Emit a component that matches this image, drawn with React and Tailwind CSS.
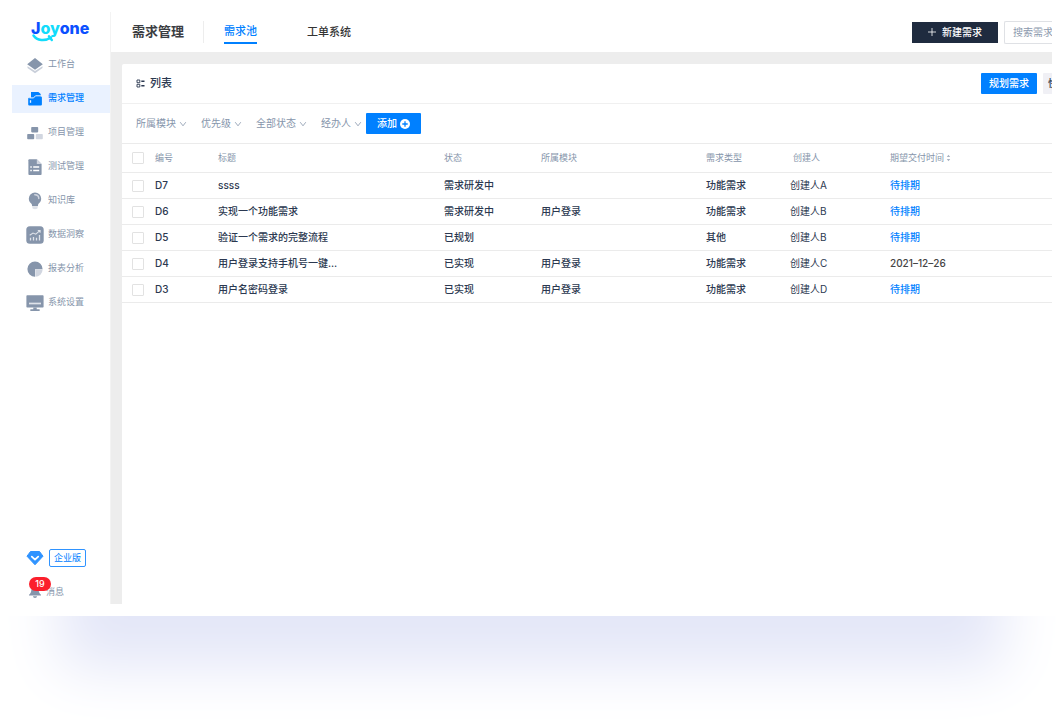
import { useState } from "react";

const menuItems = [
  { key: "workbench", label: "工作台" },
  { key: "demand", label: "需求管理" },
  { key: "project", label: "项目管理" },
  { key: "test", label: "测试管理" },
  { key: "wiki", label: "知识库" },
  { key: "insight", label: "数据洞察" },
  { key: "report", label: "报表分析" },
  { key: "settings", label: "系统设置" },
];

const filters = ["所属模块", "优先级", "全部状态", "经办人"];

const rows = [
  { id: "D7", title: "ssss", status: "需求研发中", module: "", type: "功能需求", creator: "创建人A", date: "" },
  { id: "D6", title: "实现一个功能需求", status: "需求研发中", module: "用户登录", type: "功能需求", creator: "创建人B", date: "" },
  { id: "D5", title: "验证一个需求的完整流程", status: "已规划", module: "", type: "其他", creator: "创建人B", date: "" },
  { id: "D4", title: "用户登录支持手机号一键…", status: "已实现", module: "用户登录", type: "功能需求", creator: "创建人C", date: "2021–12–26" },
  { id: "D3", title: "用户名密码登录", status: "已实现", module: "用户登录", type: "功能需求", creator: "创建人D", date: "" },
];

const MenuIcon = ({ name }) => {
  const shapes = {
    workbench: (
      <>
        <path d="M1.5 10.300 9 15l7.500-4.700v1.800L9 17.200l-7.500-5.100z" fill="#c9cfda" />
        <path d="M9 2 16.800 8.200 9 13.800 1.200 8.200z" />
      </>
    ),
    demand: (
      <>
        <path d="M5 2h7.400l2.300 2v4H5z" />
        <path d="M3.200 7.800h4.300l1.800-1.300h5.600a1 1 0 0 1 1 1v7a1 1 0 0 1-1 1H3.200a1 1 0 0 1-1-1V8.800a1 1 0 0 1 1-1z" />
        <path d="M3.400 7.900h4.200l1.900-2.100h5.400" fill="none" stroke="#eaf2ff" strokeWidth="1" />
        <path d="M4.500 10.200v2.600" stroke="#eaf2ff" strokeWidth="1.300" />
      </>
    ),
    project: (
      <>
        <rect x="5.200" y="3" width="7" height="5.400" rx=".8" />
        <rect x="1.200" y="10" width="7" height="5.200" rx=".8" />
        <rect x="9.800" y="10" width="7" height="5.200" rx=".8" fill="#d1d6e0" />
      </>
    ),
    test: (
      <>
        <path d="M3.300 1.300h7.500l4.800 4.800v10a.9.900 0 0 1-.9.900H3.300a.9.900 0 0 1-.9-.900V2.200a.9.900 0 0 1 .9-.900z" />
        <path d="M10.800 1.300v4.800h4.800z" fill="#d1d6e0" />
        <path d="M4.300 9h1.500M7.200 9h6M4.300 12.500h1.500M7.200 12.500h6" stroke="#fff" strokeWidth="1.300" />
      </>
    ),
    wiki: (
      <>
        <path d="M9 .500a6.200 6.200 0 0 1 6.200 6.200c0 2.600-1.600 4.200-2.900 5.300l-.5 2.300H6.200L5.700 12C4.400 10.900 2.800 9.300 2.800 6.700A6.200 6.200 0 0 1 9 .500z" />
        <path d="M8.800 2.800c2.200 0 3.900 1.300 4 3.600" fill="none" stroke="#d1d6e0" strokeWidth="1.500" strokeLinecap="round" />
        <path d="M6.400 14.900h5.200v1.200c0 .6-1 1.100-2.600 1.100s-2.600-.5-2.600-1.100z" fill="#dde1e8" />
      </>
    ),
    insight: (
      <>
        <rect x=".3" y=".3" width="17.400" height="17.400" rx="3.500" />
        <path d="M3.700 9.200 7 7l2.800 1.200 4-3.500M11.800 4.500h2.300v2.200" fill="none" stroke="#dfe3ea" strokeWidth="1.100" />
        <path d="M4.500 11.800v2.700M7.500 11v3.500M10.500 11.800v2.700M13.500 9v5.500" stroke="#dfe3ea" strokeWidth="1.300" />
      </>
    ),
    report: (
      <>
        <path d="M9 1.500a7.600 7.600 0 1 0 0 15.200V9.200h7.600A7.600 7.600 0 0 0 9 1.500z" />
        <path d="M9.300 9.500h7.300a7.400 7.400 0 0 1-7.300 7.300z" fill="#d1d6e0" />
      </>
    ),
    settings: (
      <>
        <rect x=".4" y="1.300" width="17.200" height="12.300" rx=".8" />
        <path d="M3 9.500h12" stroke="#dfe3ea" strokeWidth="1.700" />
        <path d="M7.300 13.500h3.400v1.700H13a.9.900 0 0 1 0 1.800H5a.9.900 0 0 1 0-1.800h2.300z" />
      </>
    ),
  };

  return (
    <svg viewBox="0 0 18 18" fill="currentColor" className="w-[18px] h-[18px] shrink-0" aria-hidden="true">
      {shapes[name]}
    </svg>
  );
};

const Logo = () => (
  <a href="#" className="relative block ml-[19px] h-6 font-['Inter',sans-serif] text-[16px] leading-6 font-extrabold text-[#0b50ff]">
    J<span className="text-[#12dcfb]">oy</span>one
    <svg viewBox="0 0 24 8" className="absolute left-px top-[18px] w-6 h-2" aria-hidden="true">
      <path d="M1.500 1.500C5 6.800 13 7.400 19 3.400M17 2.200l2.800 3.800" fill="none" stroke="#12dcfb" strokeWidth="2.400" strokeLinecap="round" />
    </svg>
  </a>
);

const Chevron = () => (
  <svg viewBox="0 0 8 8" className="w-2 h-2" fill="none" stroke="currentColor" strokeWidth=".8" aria-hidden="true">
    <path d="M1.200 2.200 4 5.800l2.800-3.600" />
  </svg>
);

const Sidebar = ({ active, setActive }) => (
  <aside className="flex flex-col w-[99px] shrink-0 border-r border-[#f3f3f3] pt-1">
    <Logo />
    <nav className="flex flex-col gap-1.5 mt-[11px]">
      {menuItems.map((item) => (
        <a
          key={item.key}
          href={"#" + item.key}
          onClick={() => setActive(item.key)}
          className={
            active === item.key
              ? "flex items-center gap-1 h-7 pl-3.5 bg-[#eaf2ff] text-[#0080ff] font-medium"
              : "flex items-center gap-1 h-7 pl-3.5 text-[#8695ab]"
          }
        >
          <MenuIcon name={item.key} />
          <span className="text-[9px] leading-3 pb-0.5">{item.label}</span>
        </a>
      ))}
    </nav>

    <div className="mt-auto pl-3.5 pb-1">
      <div className="flex items-center gap-[5px]">
        <svg viewBox="0 0 18 18" className="w-[18px] h-[18px]" aria-hidden="true">
          <path d="M4.500 2.500h9L17 7.200 9 15.800 1 7.200z" fill="#2f93ff" stroke="#2f93ff" strokeLinejoin="round" />
          <path d="m5.800 7.600 3.200 3 3.200-3" fill="none" stroke="#fff" strokeWidth="1.800" strokeLinecap="round" strokeLinejoin="round" />
        </svg>
        <a href="#plan" className="px-1 h-[18px] border border-[#2f93ff] rounded-[2px] text-[9px] leading-4 text-[#0080ff]">
          企业版
        </a>
      </div>
      <a href="#message" className="relative flex items-center gap-0.5 mt-[17px] h-4 text-[#8695ab]">
        <svg viewBox="0 0 18 18" className="w-[18px] h-[18px]" fill="currentColor" aria-hidden="true">
          <path d="M9 4c2.500 0 3.600 1.600 3.800 4 .1 1.600.9 2.600 2.200 3.700v.8H3v-.8c1.300-1.100 2.100-2.100 2.200-3.700C5.400 5.600 6.500 4 9 4zM7 13.300h4c0 1-.9 1.600-2 1.600s-2-.6-2-1.600z" />
        </svg>
        <span className="text-[9px] leading-3">消息</span>
        <span className="absolute left-[3px] -top-[7px] w-[22px] h-3.5 rounded-full bg-[#fb1f2c] text-white text-[9px] leading-3.5 font-medium text-center">
          19
        </span>
      </a>
    </div>
  </aside>
);

const Header = () => (
  <header className="flex items-center h-10 bg-white pl-[21px]">
    <h1 className="text-[13px] font-bold text-[#3b3d42]">需求管理</h1>
    <span className="w-px h-[22px] ml-[19px] bg-[#ededed]" />
    <nav className="flex items-center ml-5 text-[11px] font-medium">
      <a href="#pool" className="h-6 border-b-2 border-[#0080ff] leading-[22px] text-[#0080ff]">
        需求池
      </a>
      <a href="#ticket" className="ml-[50px] text-[#333]">
        工单系统
      </a>
    </nav>
    <div className="flex items-center gap-1.5 ml-auto">
      <button className="flex items-center gap-1.5 h-[21px] px-4 bg-[#1f2b3f] text-white text-[10px] font-medium">
        <svg viewBox="0 0 9 9" className="w-2 h-2" stroke="currentColor" strokeWidth=".9" aria-hidden="true">
          <path d="M4.500 0v9M0 4.500h9" />
        </svg>
        新建需求
      </button>
      <input
        type="text"
        aria-label="搜索需求"
        placeholder="搜索需求"
        className="w-12 h-[23px] pl-2 border border-r-0 border-[#dfe1e5] rounded-l-[2px] text-[10px] placeholder:text-[#8c99ae] outline-none"
      />
    </div>
  </header>
);

const DemandTable = () => (
  <table className="w-full table-fixed text-left text-[10px] text-[#2b3850] border-t border-[#ebebeb]">
    <colgroup>
      <col className="w-[33px]" />
      <col className="w-[63px]" />
      <col />
      <col className="w-[97px]" />
      <col className="w-[165px]" />
      <col className="w-[84px]" />
      <col className="w-[100px]" />
      <col className="w-[162px]" />
    </colgroup>
    <thead>
      <tr className="h-[29px] border-b border-[#ebebeb] text-[9px] text-[#8695ab]">
        <th className="pl-2.5">
          <input type="checkbox" aria-label="全选" className="block appearance-none w-3 h-3 border border-[#e2e2e2] rounded-[1px] bg-white" />
        </th>
        <th className="font-normal">编号</th>
        <th className="font-normal">标题</th>
        <th className="font-normal">状态</th>
        <th className="font-normal">所属模块</th>
        <th className="font-normal">需求类型</th>
        <th className="font-normal pl-[3px]">创建人</th>
        <th className="font-normal">
          <button className="flex items-center gap-0.5">
            期望交付时间
            <svg viewBox="0 0 5 8" className="w-[5px] h-2" fill="#a9b2c1" aria-hidden="true">
              <path d="M2.500 .8 4.200 3H.8zM2.500 7.200 4.200 5H.8z" />
            </svg>
          </button>
        </th>
      </tr>
    </thead>
    <tbody className="font-medium">
      {rows.map((row) => (
        <tr key={row.id} className="h-[26px] border-b border-[#ebebeb]">
          <td className="pl-2.5">
            <input type="checkbox" aria-label={row.id} className="block appearance-none w-3 h-3 border border-[#e2e2e2] rounded-[1px] bg-white" />
          </td>
          <td>{row.id}</td>
          <td className="truncate">{row.title}</td>
          <td>{row.status}</td>
          <td>{row.module}</td>
          <td>{row.type}</td>
          <td className="font-normal">{row.creator}</td>
          <td>
            {row.date ? (
              <span className="text-[#444]">{row.date}</span>
            ) : (
              <a href="#schedule" className="text-[#0080ff]">待排期</a>
            )}
          </td>
        </tr>
      ))}
    </tbody>
  </table>
);

const App = () => {
  const [active, setActive] = useState("demand");

  return (
    <div className="flex min-h-screen pb-[106px] bg-white font-['Inter','Noto_Sans_CJK_SC',sans-serif]">
      <div className="flex flex-1 min-w-0 p-3 bg-white shadow-[0_112px_56px_-60px_#e4e7f8]">
        <Sidebar active={active} setActive={setActive} />
        <div className="flex flex-col flex-1 min-w-0 bg-[#ededed] overflow-hidden">
          <Header />
          <main className="flex-1 mt-3 ml-[11px] bg-white rounded-tl-[2px]">
            <div className="flex items-center h-10 pl-3.5 border-b border-[#f0f0f0]">
              <svg viewBox="0 0 9 9" className="w-[9px] h-[9px]" fill="none" stroke="#2b3850" aria-hidden="true">
                <path d="M1 1h2.800v2.700H1zM1 5.300h2.800V8H1z" strokeWidth=".9" />
                <path d="M5.300 2.300h3.200M5.300 6.700h3.200" strokeWidth="1.500" />
              </svg>
              <h2 className="ml-[5px] text-[11px] font-medium text-[#2b3850]">列表</h2>
              <div className="flex items-center gap-1.5 ml-auto">
                <button className="h-[21px] px-2 bg-[#0080ff] rounded-[1px] text-white text-[10px] font-medium">规划需求</button>
                <button className="w-[9px] h-[21px] pl-[5px] overflow-hidden bg-[#f0f0f5] rounded-l-[1px] text-[10px] font-medium text-[#2b3850] text-left whitespace-nowrap">
                  快速编辑
                </button>
              </div>
            </div>
            <div className="flex items-center h-[39px] pl-3.5 text-[10px] text-[#8695ab]">
              <div className="flex items-center gap-3.5">
                {filters.map((name) => (
                  <button key={name} className="flex items-center gap-[3px]">
                    {name}
                    <Chevron />
                  </button>
                ))}
              </div>
              <button className="flex items-center gap-[3px] h-[21px] ml-1 px-[11px] bg-[#0080ff] rounded-[1px] text-white font-medium">
                添加
                <svg viewBox="0 0 10 10" className="w-2.5 h-2.5" aria-hidden="true">
                  <circle cx="5" cy="5" r="5" fill="#fff" />
                  <path d="M5 2.300v5.400M2.300 5h5.400" stroke="#0080ff" strokeWidth="1.300" />
                </svg>
              </button>
            </div>
            <DemandTable />
          </main>
        </div>
      </div>
    </div>
  );
};

export default App;
